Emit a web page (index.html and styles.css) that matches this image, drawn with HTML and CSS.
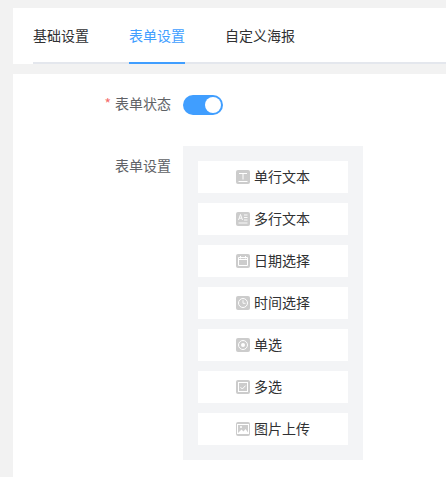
FILE: index.html
```html
<!DOCTYPE html>
<html lang="zh">
<head>
<meta charset="utf-8">
<title>表单设置</title>
<link rel="stylesheet" href="styles.css">
</head>
<body>
<div class="page">
  <section class="tabs-card">
    <nav class="tabs">
      <span class="tab">基础设置</span>
      <span class="tab active">表单设置</span>
      <span class="tab">自定义海报</span>
    </nav>
  </section>
  <section class="form-card">
    <div class="form-row status-row">
      <label class="label status-label"><span class="req">*</span>表单状态</label>
      <span class="switch"><span class="knob"></span></span>
    </div>
    <div class="form-row">
      <label class="label settings-label">表单设置</label>
      <div class="palette">
        <div class="item">
          <svg class="ico" viewBox="0 0 14 14"><rect width="14" height="14" rx="2" fill="#ccc"/><path d="M3 3.500h8M7 3.500v6M2.500 11.500h9" stroke="#fff" stroke-width="1" fill="none"/></svg>
          <span class="item-text">单行文本</span>
        </div>
        <div class="item">
          <svg class="ico" viewBox="0 0 14 14"><rect width="14" height="14" rx="2" fill="#ccc"/><path d="M2.500 8 4.500 2.500l2 5.500M3.200 6.200h2.600M8 3h3.500M8 5.500h3.500M8 8h3.500M2.500 11h9" stroke="#fff" stroke-width=".9" fill="none"/></svg>
          <span class="item-text">多行文本</span>
        </div>
        <div class="item">
          <svg class="ico" viewBox="0 0 14 14"><rect width="14" height="14" rx="2" fill="#ccc"/><path d="M2.500 3.500h9v8h-9z" fill="none" stroke="#fff"/><path d="M2.500 5.500h9" stroke="#fff"/><path d="M4.500 2v2.500M9.500 2v2.500" stroke="#fff"/></svg>
          <span class="item-text">日期选择</span>
        </div>
        <div class="item">
          <svg class="ico" viewBox="0 0 14 14"><rect width="14" height="14" rx="2" fill="#ccc"/><circle cx="7" cy="7" r="4.500" fill="none" stroke="#fff"/><path d="M7 4.200V7.300H9.500" fill="none" stroke="#fff" stroke-width=".9"/></svg>
          <span class="item-text">时间选择</span>
        </div>
        <div class="item">
          <svg class="ico" viewBox="0 0 14 14"><rect width="14" height="14" rx="2" fill="#ccc"/><circle cx="7" cy="7" r="4.500" fill="none" stroke="#fff"/><circle cx="7" cy="7" r="2" fill="#fff"/></svg>
          <span class="item-text">单选</span>
        </div>
        <div class="item">
          <svg class="ico" viewBox="0 0 14 14"><rect width="14" height="14" rx="2" fill="#ccc"/><rect x="2.500" y="2.500" width="9" height="9" fill="none" stroke="#fff"/><path d="M4.500 7.200 6.300 9l3.300-3.400" fill="none" stroke="#fff"/></svg>
          <span class="item-text">多选</span>
        </div>
        <div class="item">
          <svg class="ico" viewBox="0 0 14 14"><rect width="14" height="14" rx="2" fill="#ccc"/><rect x="1.500" y="2.500" width="11" height="9" fill="none" stroke="#fff"/><path d="M2 11 5.500 7.500l2 2 2-2.500L12 10.500V11z" fill="#fff"/><circle cx="5" cy="5" r="1" fill="#fff"/></svg>
          <span class="item-text">图片上传</span>
        </div>
      </div>
    </div>
  </section>
</div>
</body>
</html>
```
FILE: styles.css
```css
* {
  box-sizing: border-box;
}

html,
body {
  margin: 0;
  height: 100%;
  overflow: hidden;
}

body {
  background: #f2f2f2;
  font-family: "Noto Sans CJK SC", "Liberation Sans", sans-serif;
  font-size: 14px;
}

.page {
  display: flex;
  flex-direction: column;
  gap: 10px;
  height: 100%;
  padding: 8px 0 0 13px;
}

.tabs-card {
  flex: none;
  height: 56px;
  padding-left: 20px;
  background: #fff;
}

.tabs {
  display: flex;
  gap: 40px;
  height: 56px;
  border-bottom: 2px solid #e4e7ed;
}

.tab {
  height: 56px;
  line-height: 54px;
  color: #303133;
}

.tab.active {
  color: #409eff;
  border-bottom: 2px solid #409eff;
}

.form-card {
  flex: 1;
  display: flex;
  flex-direction: column;
  gap: 31px;
  padding-top: 21px;
  background: #fff;
}

.form-row {
  display: flex;
  gap: 12px;
}

.status-row {
  height: 20px;
}

.label {
  width: 158px;
  text-align: right;
  color: #606266;
  line-height: 20px;
}

.status-label {
  line-height: 16px;
}

.settings-label {
  padding-top: 9px;
}

.req {
  margin-right: 4px;
  color: #f56c6c;
}

.switch {
  display: flex;
  justify-content: flex-end;
  align-items: center;
  width: 40px;
  height: 20px;
  padding-right: 2px;
  border-radius: 10px;
  background: #409eff;
}

.knob {
  width: 16px;
  height: 16px;
  border-radius: 50%;
  background: #fff;
}

.palette {
  display: flex;
  flex-direction: column;
  gap: 10px;
  width: 180px;
  padding: 15px;
  background: #f3f4f6;
}

.item {
  display: flex;
  align-items: center;
  gap: 4px;
  height: 32px;
  padding-left: 38px;
  background: #fff;
  color: #303133;
}

.item-text {
  padding-bottom: 2px;
}

.ico {
  display: block;
  width: 14px;
  height: 14px;
}
```
